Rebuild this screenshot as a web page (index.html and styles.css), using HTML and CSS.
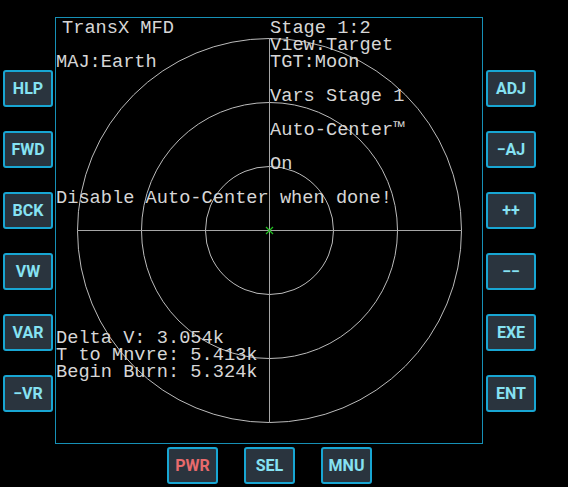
FILE: index.html
```html
<!DOCTYPE html>
<html>
<head>
<meta charset="utf-8">
<link rel="stylesheet" href="styles.css">
</head>
<body>
<div class="console">
  <div class="main">
    <div class="side side-left">
      <div class="btn">HLP</div>
      <div class="btn">FWD</div>
      <div class="btn">BCK</div>
      <div class="btn">VW</div>
      <div class="btn">VAR</div>
      <div class="btn">−VR</div>
    </div>
    <div class="screen">
      <svg class="scope" width="426" height="426" viewBox="0 0 426 426">
        <g fill="none" stroke="#bcbcbc" stroke-width="1">
          <circle cx="213.5" cy="212.5" r="64"/>
          <circle cx="213.5" cy="212.5" r="128"/>
          <circle cx="213.5" cy="212.5" r="192"/>
        </g>
        <g stroke="#a6a6a6" stroke-width="1">
          <line x1="21.5" y1="212.5" x2="405.5" y2="212.5"/>
          <line x1="213.5" y1="20.5" x2="213.5" y2="404.5"/>
        </g>
        <g stroke="#22c022" stroke-width="1.2">
          <line x1="210" y1="209" x2="217" y2="216"/>
          <line x1="217" y1="209" x2="210" y2="216"/>
        </g>
      </svg>
      <div class="text">
        <div class="row"><span class="l indent">TransX MFD</span><span class="r">Stage 1:2</span></div>
        <div class="row"><span class="l"></span><span class="r">View:Target</span></div>
        <div class="row"><span class="l">MAJ:Earth</span><span class="r">TGT:Moon</span></div>
        <div class="row"></div>
        <div class="row"><span class="l"></span><span class="r">Vars Stage 1</span></div>
        <div class="row"></div>
        <div class="row"><span class="l"></span><span class="r">Auto-Center™</span></div>
        <div class="row"></div>
        <div class="row"><span class="l"></span><span class="r">On</span></div>
        <div class="row"></div>
        <div class="row">Disable Auto-Center when done!</div>
        <div class="stats">
          <div class="row">Delta V: 3.054k</div>
          <div class="row">T to Mnvre: 5.413k</div>
          <div class="row">Begin Burn: 5.324k</div>
        </div>
      </div>
    </div>
    <div class="side side-right">
      <div class="btn">ADJ</div>
      <div class="btn">−AJ</div>
      <div class="btn">++</div>
      <div class="btn">−−</div>
      <div class="btn">EXE</div>
      <div class="btn">ENT</div>
    </div>
  </div>
  <div class="bottom">
    <div class="btn wide pwr">PWR</div>
    <div class="btn wide">SEL</div>
    <div class="btn wide">MNU</div>
  </div>
</div>
</body>
</html>
```
FILE: styles.css
```css
html, body {
  margin: 0;
  padding: 0;
  background: #000;
}
body {
  width: 568px;
  height: 487px;
  overflow: hidden;
}
.console {
  display: flex;
  flex-direction: column;
}
.main {
  display: flex;
  padding-top: 17px;
}
.side {
  display: flex;
  flex-direction: column;
  gap: 24px;
  padding-top: 53px;
}
.side-left {
  width: 52px;
  padding-left: 3px;
}
.side-right {
  padding-left: 3px;
}
.btn {
  box-sizing: border-box;
  width: 50px;
  height: 37px;
  border: 2px solid #18a6d3;
  border-radius: 3px;
  background: #2a343e;
  color: #86e2f3;
  font-family: Roboto, "Liberation Sans", sans-serif;
  font-weight: 700;
  font-size: 16px;
  display: flex;
  align-items: center;
  justify-content: center;
}
.btn.wide {
  width: 51px;
}
.btn.pwr {
  color: #e86a6c;
}
.screen {
  position: relative;
  box-sizing: border-box;
  width: 428px;
  height: 427px;
  border: 1px solid #1690b6;
  background: #000;
}
.scope {
  position: absolute;
  left: 0;
  top: 0;
}
.text {
  position: relative;
  padding-top: 2px;
  font-family: "Liberation Mono", "DejaVu Sans Mono", monospace;
  font-size: 18.67px;
  line-height: 17.04px;
  color: #d6d6d6;
}
.row {
  display: flex;
  height: 17.04px;
  white-space: pre;
}
.l {
  width: 214px;
  flex: none;
}
.indent {
  box-sizing: border-box;
  padding-left: 6px;
}
.stats {
  margin-top: 123px;
}
.bottom {
  display: flex;
  gap: 26px;
  padding-top: 3px;
  padding-left: 167px;
}
```
